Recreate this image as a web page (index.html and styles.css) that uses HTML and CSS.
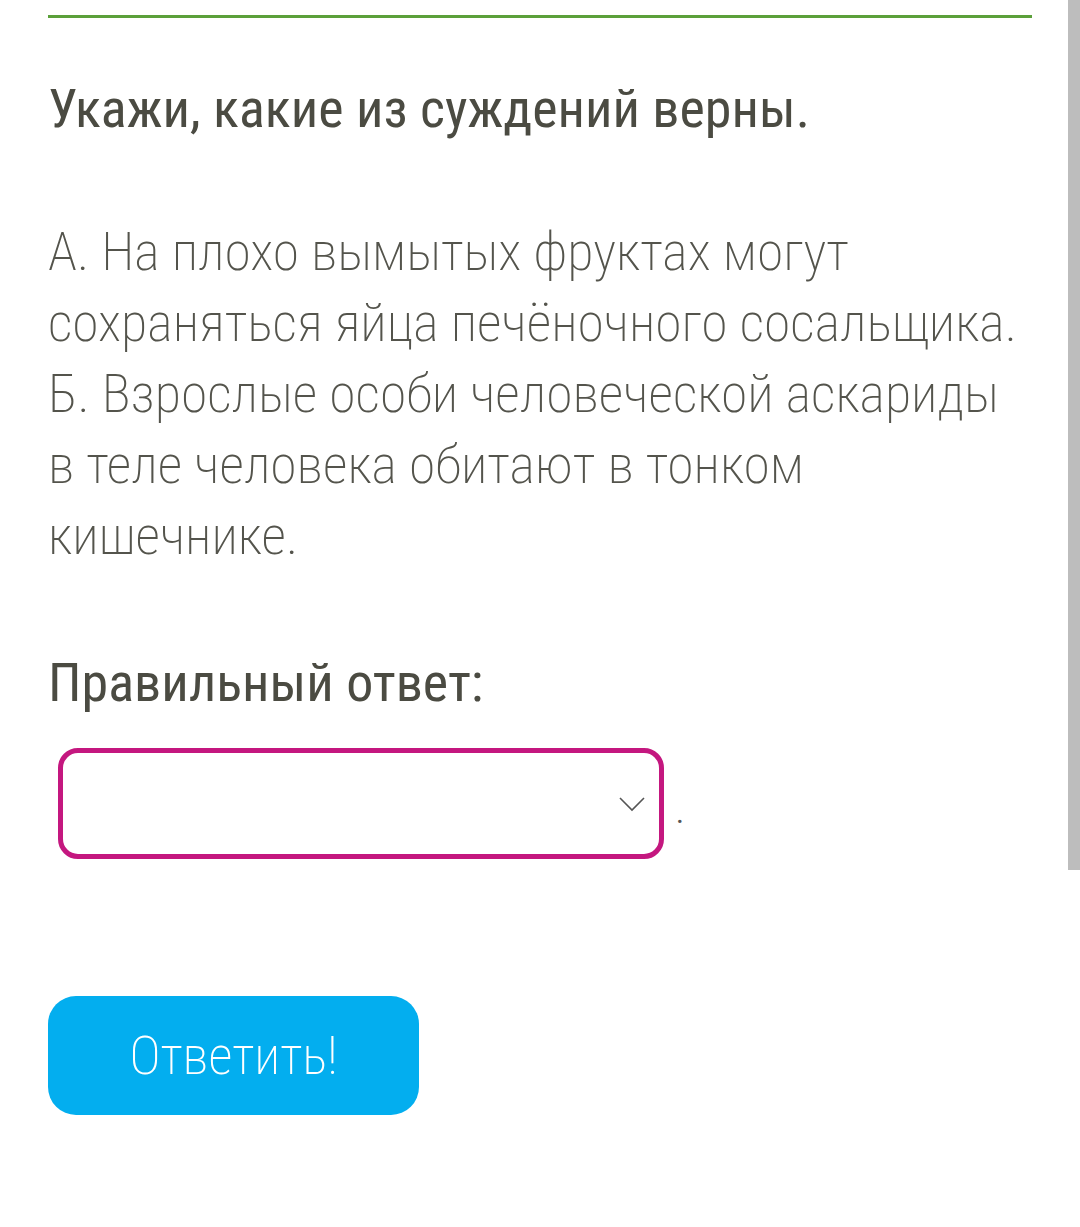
FILE: index.html
```html
<!DOCTYPE html>
<html>
<head>
    <title>Задание</title>
    <link rel="stylesheet" href="styles.css">
</head>
<body>
    <div class="page">
        <div class="top-line"></div>

        <h1 class="question">Укажи, какие из суждений верны.</h1>

        <p class="statements">
            А. На плохо вымытых фруктах могут сохраняться яйца печёночного сосальщика.<br>
            Б. Взрослые особи человеческой аскариды в теле человека обитают в тонком кишечнике.
        </p>

        <h2 class="answer-title">Правильный ответ:</h2>

        <div class="answer-row">
            <div class="select-box">
                <svg class="chevron" width="26" height="16" viewBox="0 0 26 16">
                    <path d="M1 2 L13 14 L25 2" fill="none" stroke="#555" stroke-width="1.6"/>
                </svg>
            </div>
            <span class="dot">.</span>
        </div>

        <button class="submit">Ответить!</button>
    </div>

    <div class="scrollbar"></div>
</body>
</html>
```

FILE: styles.css
```css
body {
    margin: 0;
    background-color: #fff;
    font-family: "Roboto Condensed", Roboto, sans-serif;
    font-stretch: 87.5%;
    color: #4b4b42;
}

.page {
    width: 984px;
    padding: 15px 0 0 48px;
}

.top-line {
    height: 3px;
    background-color: #5ba03a;
}

.question {
    font-size: 54px;
    font-weight: 370;
    line-height: 64px;
    margin: 59px 0 0 0;
}

.statements {
    font-size: 54px;
    font-weight: 250;
    line-height: 71px;
    color: #54544c;
    margin: 75px 0 0 0;
}

.answer-title {
    font-size: 54px;
    font-weight: 370;
    line-height: 64px;
    margin: 80px 0 0 0;
}

.answer-row {
    display: flex;
    align-items: center;
    margin-top: 33px;
    margin-left: 10px;
}

.select-box {
    width: 596px;
    height: 101px;
    border: 5px solid #c4177f;
    border-radius: 20px;
    display: flex;
    align-items: center;
    justify-content: flex-end;
}

.chevron {
    margin-right: 14px;
    margin-top: 0;
}

.dot {
    font-size: 30px;
    color: #555;
    margin-left: 12px;
    margin-top: 18px;
}

.submit {
    display: block;
    width: 371px;
    height: 119px;
    margin-top: 137px;
    background-color: #03aeef;
    color: #fff;
    border: none;
    border-radius: 28px;
    font-family: inherit;
    font-stretch: inherit;
    font-size: 53px;
    font-weight: 250;
    cursor: pointer;
}

.scrollbar {
    position: fixed;
    top: 0;
    right: 0;
    width: 12px;
    height: 870px;
    background-color: #bdbdbd;
}
```
